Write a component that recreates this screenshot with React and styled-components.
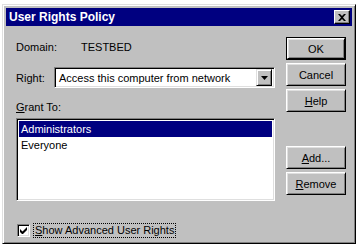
import React from 'react'
import styled, { createGlobalStyle } from 'styled-components'

const Global = createGlobalStyle`
  html, body {
    margin: 0;
    padding: 0;
    background: #ffffff;
  }
  body {
    font-family: "Liberation Sans", Arial, sans-serif;
    font-size: 11px;
    color: #000000;
  }
`

const Window = styled.div`
  margin: 4px 0 0 2px;
  width: 354px;
  height: 240px;
  box-sizing: border-box;
  background: #c0c0c0;
  border-top: 1px solid #dfdfdf;
  border-left: 1px solid #dfdfdf;
  border-right: 1px solid #000000;
  border-bottom: 1px solid #000000;
  box-shadow: inset 1px 1px 0 #ffffff, inset -1px -1px 0 #808080;
  padding: 3px;
  display: flex;
  flex-direction: column;
`

const TitleBar = styled.div`
  height: 18px;
  background: #000080;
  color: #ffffff;
  font-weight: bold;
  font-size: 12px;
  display: flex;
  align-items: center;
  justify-content: space-between;
  padding: 0 2px 0 3px;
`

const CloseBox = styled.div`
  width: 16px;
  height: 14px;
  box-sizing: border-box;
  background: #c0c0c0;
  border-top: 1px solid #ffffff;
  border-left: 1px solid #ffffff;
  border-right: 1px solid #000000;
  border-bottom: 1px solid #000000;
  box-shadow: inset -1px -1px 0 #808080;
  display: flex;
  align-items: center;
  justify-content: center;
`

const Body = styled.div`
  display: flex;
  gap: 11px;
  padding-left: 10px;
`

const Main = styled.div`
  width: 259px;
  display: flex;
  flex-direction: column;
`

const Side = styled.div`
  width: 60px;
  display: flex;
  flex-direction: column;
  gap: 3px;
  padding-top: 11px;
`

const Row = styled.div`
  display: flex;
  align-items: center;
  height: ${p => p.h || 13}px;
  margin-top: ${p => p.mt || 0}px;
`

const Label = styled.span`
  width: ${p => p.w}px;
  flex-shrink: 0;
`

const Combo = styled.div`
  flex: 1;
  height: 21px;
  box-sizing: border-box;
  background: #ffffff;
  border-top: 1px solid #808080;
  border-left: 1px solid #808080;
  border-right: 1px solid #ffffff;
  border-bottom: 1px solid #ffffff;
  box-shadow: inset 1px 1px 0 #000000, inset -1px -1px 0 #dfdfdf;
  display: flex;
  align-items: center;
  padding: 2px 2px 2px 4px;
`

const ComboText = styled.span`
  flex: 1;
`

const DropButton = styled.div`
  width: 16px;
  height: 17px;
  box-sizing: border-box;
  background: #c0c0c0;
  border-top: 1px solid #dfdfdf;
  border-left: 1px solid #dfdfdf;
  border-right: 1px solid #000000;
  border-bottom: 1px solid #000000;
  box-shadow: inset 1px 1px 0 #ffffff, inset -1px -1px 0 #808080;
  display: flex;
  align-items: center;
  justify-content: center;
`

const ListBox = styled.div`
  margin-top: 5px;
  height: 83px;
  box-sizing: border-box;
  background: #ffffff;
  border-top: 1px solid #808080;
  border-left: 1px solid #808080;
  border-right: 1px solid #ffffff;
  border-bottom: 1px solid #ffffff;
  box-shadow: inset 1px 1px 0 #000000, inset -1px -1px 0 #dfdfdf;
  padding: 2px;
`

const ListItem = styled.div`
  height: 16px;
  line-height: 16px;
  padding-left: 2px;
  background: ${p => (p.selected ? '#000080' : 'transparent')};
  color: ${p => (p.selected ? '#ffffff' : '#000000')};
`

const CheckRow = styled.label`
  display: flex;
  align-items: center;
  gap: 3px;
  margin-top: 22px;
  padding-left: 1px;
`

const CheckBox = styled.span`
  width: 13px;
  height: 13px;
  box-sizing: border-box;
  background: #ffffff;
  border-top: 1px solid #808080;
  border-left: 1px solid #808080;
  border-right: 1px solid #ffffff;
  border-bottom: 1px solid #ffffff;
  box-shadow: inset 1px 1px 0 #000000, inset -1px -1px 0 #dfdfdf;
  display: flex;
  align-items: center;
  justify-content: center;
`

const FocusText = styled.span`
  border: 1px dotted #000000;
  padding: 0 1px;
  line-height: 13px;
`

const Button = styled.div`
  height: 23px;
  box-sizing: border-box;
  background: #c0c0c0;
  border: 1px solid ${p => (p.def ? '#000000' : 'transparent')};
  display: flex;
  margin-top: ${p => p.mt || 0}px;
`

const ButtonFace = styled.div`
  flex: 1;
  box-sizing: border-box;
  border-top: 1px solid #ffffff;
  border-left: 1px solid #ffffff;
  border-right: 1px solid #000000;
  border-bottom: 1px solid #000000;
  box-shadow: inset 1px 1px 0 #dfdfdf, inset -1px -1px 0 #808080;
  display: flex;
  align-items: center;
  justify-content: center;
`

const Plain = styled(ButtonFace)`
  margin: -1px;
`

const U = styled.span`
  text-decoration: underline;
`

const PushButton = ({ def, mt, children }) => (
  <Button def={def} mt={mt}>
    {def ? <ButtonFace>{children}</ButtonFace> : <Plain>{children}</Plain>}
  </Button>
)

const App = () => (
  <>
    <Global />
    <Window>
      <TitleBar>
        <span>User Rights Policy</span>
        <CloseBox>
          <svg width="8" height="7" viewBox="0 0 8 7">
            <path d="M0 0h2l2 2 2-2h2L5 3.5 8 7H6L4 5 2 7H0l3-3.5z" fill="#000" />
          </svg>
        </CloseBox>
      </TitleBar>
      <Body>
        <Main>
          <Row mt={14}>
            <Label w={65}>Domain:</Label>
            <span>TESTBED</span>
          </Row>
          <Row mt={14} h={21}>
            <Label w={38}>Ri<U>g</U>ht:</Label>
            <Combo>
              <ComboText>Access this computer from network</ComboText>
              <DropButton>
                <svg width="7" height="4" viewBox="0 0 7 4">
                  <path d="M0 0h7L3.5 4z" fill="#000" />
                </svg>
              </DropButton>
            </Combo>
          </Row>
          <Row mt={12}>
            <span><U>G</U>rant To:</span>
          </Row>
          <ListBox>
            <ListItem selected>Administrators</ListItem>
            <ListItem>Everyone</ListItem>
          </ListBox>
          <CheckRow>
            <CheckBox>
              <svg width="7" height="7" viewBox="0 0 7 7">
                <path d="M0 2v3l2 2h1l4-4V0L2.5 4.5z" fill="#000" />
              </svg>
            </CheckBox>
            <FocusText><U>S</U>how Advanced User Rights</FocusText>
          </CheckRow>
        </Main>
        <Side>
          <PushButton def>OK</PushButton>
          <PushButton>Cancel</PushButton>
          <PushButton><span><U>H</U>elp</span></PushButton>
          <PushButton mt={31}><span><U>A</U>dd...</span></PushButton>
          <PushButton><span><U>R</U>emove</span></PushButton>
        </Side>
      </Body>
    </Window>
  </>
)

export default App
